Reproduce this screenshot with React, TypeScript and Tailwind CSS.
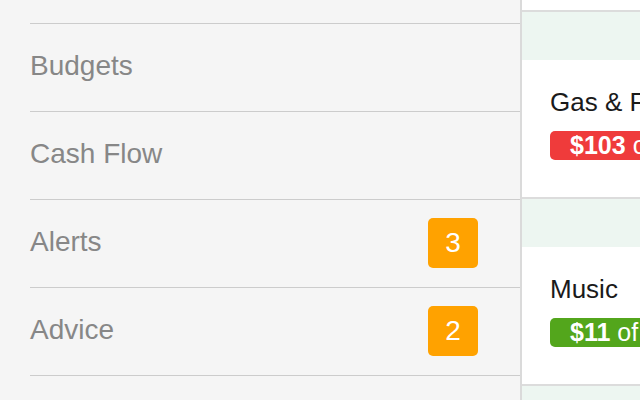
import React from 'react';

const navItems = [
  { label: 'Budgets', badge: null },
  { label: 'Cash Flow', badge: null },
  { label: 'Alerts', badge: 3 },
  { label: 'Advice', badge: 2 },
];

const budgets = [
  { name: 'Gas & Fuel', spent: '$103', rest: 'of $90', color: 'bg-[#ef3b3b]' },
  { name: 'Music', spent: '$11', rest: 'of $20', color: 'bg-[#53a61c]' },
];

export default function App() {
  return (
    <div
      className="flex h-[400px] w-[640px] overflow-hidden bg-white"
      style={{ fontFamily: '"Liberation Sans", Arial, sans-serif' }}
    >
      {/* Side menu */}
      <div className="w-[522px] shrink-0 border-r-2 border-[#dadada] bg-[#f5f5f5]">
        <div className="ml-[30px] h-[24px] border-b border-[#cccccc]" />
        {navItems.map((item) => (
          <div
            key={item.label}
            className="ml-[30px] flex h-[88px] items-center justify-between border-b border-[#cccccc] pr-[42px]"
          >
            <span className="mb-[4px] text-[28px] leading-[32px] text-[#878787]">{item.label}</span>
            {item.badge !== null && (
              <span className="mb-[1px] flex h-[50px] w-[50px] items-center justify-center rounded-[5px] bg-[#ffa200] text-[28px] text-white">
                {item.badge}
              </span>
            )}
          </div>
        ))}
      </div>

      {/* Budget list peeking out */}
      <div className="min-w-0 flex-1 overflow-hidden">
        <div className="h-[12px] border-b-2 border-[#dcdcdc] bg-white" />
        {budgets.map((b) => (
          <div key={b.name}>
            <div className="h-[48px] bg-[#edf6f1]" />
            <div className="h-[139px] border-b-2 border-[#dcdcdc] bg-white pl-[28px] pt-[27px]">
              <div className="whitespace-nowrap text-[26px] leading-[30px] text-[#1a1a1a]">{b.name}</div>
              <div
                className={`mt-[14px] inline-flex h-[29px] items-center whitespace-nowrap rounded-[5px] px-[20px] text-[25px] text-white ${b.color}`}
              >
                <span className="font-bold">{b.spent}</span>
                <span className="ml-[7px]">{b.rest}</span>
              </div>
            </div>
          </div>
        ))}
        <div className="h-[48px] bg-[#edf6f1]" />
      </div>
    </div>
  );
}
